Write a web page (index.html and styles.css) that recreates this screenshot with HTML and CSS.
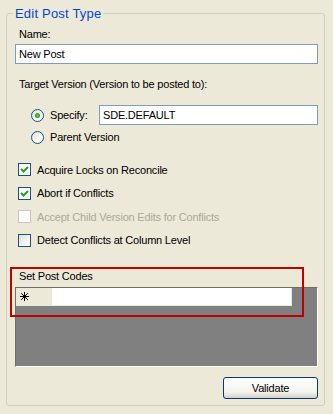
FILE: index.html
```html
<!DOCTYPE html>
<html lang="en">
<head>
    <meta charset="UTF-8">
    <meta name="viewport" content="width=device-width, initial-scale=1.0">
    <title>Edit Post Type</title>
    <link rel="stylesheet" href="styles.css">
</head>
<body>

<fieldset class="group">
    <legend>Edit Post Type</legend>

    <div class="label">Name:</div>
    <input type="text" class="text-input" value="New Post">

    <div class="label target">Target Version (Version to be posted to):</div>

    <div class="radio-row specify">
        <span class="radio checked"></span>
        <span class="radio-text">Specify:</span>
        <input type="text" class="text-input version" value="SDE.DEFAULT">
    </div>
    <div class="radio-row parent">
        <span class="radio"></span>
        <span class="radio-text">Parent Version</span>
    </div>

    <div class="check-row first">
        <span class="check checked">
            <svg width="9" height="9" viewBox="0 0 9 9"><path d="M1 4 L3.5 6.5 L8 2" fill="none" stroke="#21a121" stroke-width="2"/></svg>
        </span>
        <span>Acquire Locks on Reconcile</span>
    </div>
    <div class="check-row">
        <span class="check checked">
            <svg width="9" height="9" viewBox="0 0 9 9"><path d="M1 4 L3.5 6.5 L8 2" fill="none" stroke="#21a121" stroke-width="2"/></svg>
        </span>
        <span>Abort if Conflicts</span>
    </div>
    <div class="check-row disabled">
        <span class="check"></span>
        <span>Accept Child Version Edits for Conflicts</span>
    </div>
    <div class="check-row">
        <span class="check empty"></span>
        <span>Detect Conflicts at Column Level</span>
    </div>

    <div class="label codes">Set Post Codes</div>
    <div class="grid">
        <div class="grid-row">
            <div class="row-head">
                <svg width="9" height="9" viewBox="0 0 9 9"><path d="M4.5 0 V9 M0 4.5 H9 M1.2 1.2 L7.8 7.8 M7.8 1.2 L1.2 7.8" stroke="#000" stroke-width="1"/></svg>
            </div>
            <div class="row-cell"></div>
        </div>
    </div>

    <div class="actions">
        <button class="btn">Validate</button>
    </div>
</fieldset>

<div class="highlight"></div>

</body>
</html>
```

FILE: styles.css
```css
body {
    margin: 0;
    background: #ece9d8;
    font-family: "Liberation Sans", Arial, sans-serif;
    font-size: 11px;
    letter-spacing: -0.2px;
    color: #000;
}
.group {
    margin: 6px 8px 0 6px;
    padding: 8px 6px 6px 8px;
    border: 1px solid #d0d0bf;
    border-radius: 3px;
    min-inline-size: 0;
}
.group legend {
    margin-left: -2px;
    padding: 2px 2px 0 2px;
    font-size: 13px;
    line-height: 12px;
    letter-spacing: 0.2px;
    color: #0046d5;
}
.label {
    line-height: 13px;
    padding-left: 4px;
}
.text-input {
    display: block;
    box-sizing: border-box;
    width: 100%;
    height: 20px;
    margin: 3px 0 0 0;
    padding: 0 3px;
    border: 1px solid #7f9db9;
    background: #fff;
    font-family: inherit;
    font-size: 11px;
    letter-spacing: -0.2px;
    outline: none;
}
.target {
    margin-top: 14px;
}
.radio-row {
    display: flex;
    align-items: center;
    height: 20px;
    padding-left: 16px;
}
.specify {
    margin-top: 14px;
}
.parent {
    margin-top: 2px;
}
.radio {
    box-sizing: border-box;
    width: 13px;
    height: 13px;
    border: 1px solid #1c5180;
    border-radius: 50%;
    background: linear-gradient(135deg, #dcdcd7, #ffffff 70%);
    position: relative;
    flex-shrink: 0;
}
.radio.checked::after {
    content: "";
    position: absolute;
    left: 3px;
    top: 3px;
    width: 5px;
    height: 5px;
    border-radius: 50%;
    background: radial-gradient(circle, #55d551 0, #21a121 70%);
}
.radio-text {
    margin-left: 6px;
}
.specify .radio-text {
    width: 49px;
}
.version {
    flex: 1;
    margin: 0;
}
.check-row {
    display: flex;
    align-items: center;
    height: 20px;
    margin-top: 3.5px;
    padding-left: 3px;
}
.check-row.first {
    margin-top: 12.5px;
}
.check {
    box-sizing: border-box;
    display: flex;
    align-items: center;
    justify-content: center;
    width: 13px;
    height: 13px;
    margin-right: 6px;
    border: 1px solid #1c5180;
    background: #fff;
}
.check.empty {
    background: linear-gradient(135deg, #dcdcd7, #ffffff 85%);
}
.check-row.disabled {
    color: #aca899;
}
.check-row.disabled .check {
    border-color: #cac8bb;
}
.codes {
    margin-top: 20px;
}
.grid {
    box-sizing: border-box;
    height: 80px;
    margin-top: 3.5px;
    border-top: 1px solid #716f64;
    border-left: 1px solid #716f64;
    border-right: 1px solid #fff;
    border-bottom: 1px solid #fff;
    background: #808080;
}
.grid-row {
    display: flex;
    width: 276px;
    height: 18px;
}
.row-head {
    display: flex;
    align-items: center;
    width: 36px;
    padding-left: 4px;
    box-sizing: border-box;
    background: #ece9d8;
}
.row-cell {
    flex: 1;
    background: #fff;
    border-right: 1px solid #ece9d8;
    border-bottom: 1px solid #ece9d8;
}
.actions {
    display: flex;
    justify-content: flex-end;
    margin-top: 10px;
}
.btn {
    width: 95px;
    height: 22px;
    border: 1px solid #003c74;
    border-radius: 3px;
    background: linear-gradient(#ffffff, #f3f3ef 70%, #d6d0c5);
    font-family: inherit;
    font-size: 11px;
    letter-spacing: -0.2px;
    color: #000;
    padding: 0;
}
.highlight {
    position: absolute;
    left: 10px;
    top: 267px;
    width: 294px;
    height: 50px;
    box-sizing: border-box;
    border: 2px solid #c00000;
}
```
